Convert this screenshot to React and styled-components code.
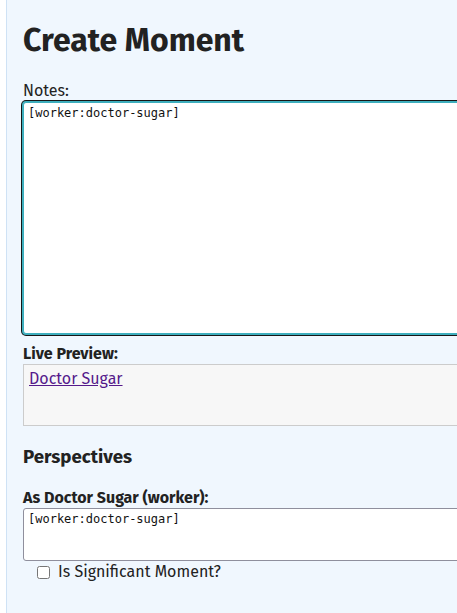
import React from "react";
import styled, { createGlobalStyle } from "styled-components";

const Global = createGlobalStyle`
  html, body { margin: 0; padding: 0; background: #ffffff; overflow: hidden; }
  body { font-family: "Fira Sans", "Open Sans", "Noto Sans", sans-serif; color: #222222; }
`;

const Panel = styled.main`
  margin-left: 6px;
  min-height: 100vh;
  width: 620px;
  box-sizing: border-box;
  border-left: 1px solid #cfe2f5;
  background: #f0f7fe;
  padding: 20px 0 0 16px;
`;

const Title = styled.h1`
  margin: 0 0 21px;
  font-size: 32px;
  line-height: 40px;
  font-weight: 700;
  color: #222222;
`;

const Label = styled.label`
  display: block;
  font-size: 16px;
  line-height: 20px;
  font-weight: ${(p) => (p.$bold ? 700 : 400)};
  color: #222222;
  margin-top: ${(p) => p.$top || 0}px;
`;

const TextArea = styled.textarea`
  display: block;
  box-sizing: border-box;
  width: 560px;
  height: ${(p) => p.$height}px;
  margin: ${(p) => (p.$focused ? "1px 0 0" : "0")};
  padding: 3px 4px 2px;
  font-family: "DejaVu Sans Mono", monospace;
  font-size: 12px;
  line-height: 14px;
  color: #111111;
  background: #ffffff;
  resize: none;
  border-radius: 3px;
  border: 1px solid ${(p) => (p.$focused ? "#3eaebd" : "#8f8f9d")};
  box-shadow: ${(p) => (p.$focused ? "0 0 0 1px #3eaebd, 0 0 0 2px #161616" : "none")};
  outline: none;
  caret-color: #111111;
`;

const Preview = styled.div`
  box-sizing: border-box;
  width: 560px;
  height: 62px;
  padding: 4px 5px;
  background: #f7f7f7;
  border: 1px solid #cccccc;
  font-size: 16px;
  line-height: 20px;
`;

const PreviewLink = styled.a`
  color: #551a8b;
  text-decoration: underline;
`;

const Section = styled.h3`
  margin: 19px 0 0;
  font-size: 18.72px;
  line-height: 24px;
  font-weight: 700;
  color: #222222;
`;

const CheckRow = styled.label`
  display: flex;
  align-items: center;
  gap: 8px;
  margin-top: 1px;
  padding-left: 14px;
  font-size: 16px;
  line-height: 20px;
  color: #222222;
`;

const Check = styled.input`
  margin: 0;
  width: 13px;
  height: 13px;
`;

export default function App() {
  const ref = React.useRef(null);
  React.useEffect(() => {
    const el = ref.current;
    if (el) {
      el.focus();
      el.setSelectionRange(el.value.length, el.value.length);
    }
  }, []);
  return (
    <>
      <Global />
      <Panel>
        <Title>Create Moment</Title>
        <Label htmlFor="notes">Notes:</Label>
        <TextArea
          id="notes"
          ref={ref}
          $focused
          $height={232}
          defaultValue="[worker:doctor-sugar] "
        />
        <Label $bold $top={10}>Live Preview:</Label>
        <Preview>
          <PreviewLink href="#doctor-sugar">Doctor Sugar</PreviewLink>
        </Preview>
        <Section>Perspectives</Section>
        <Label $bold $top={19} htmlFor="persp">As Doctor Sugar (worker):</Label>
        <TextArea id="persp" $height={53} defaultValue="[worker:doctor-sugar]" />
        <CheckRow>
          <Check type="checkbox" />
          Is Significant Moment?
        </CheckRow>
      </Panel>
    </>
  );
}
